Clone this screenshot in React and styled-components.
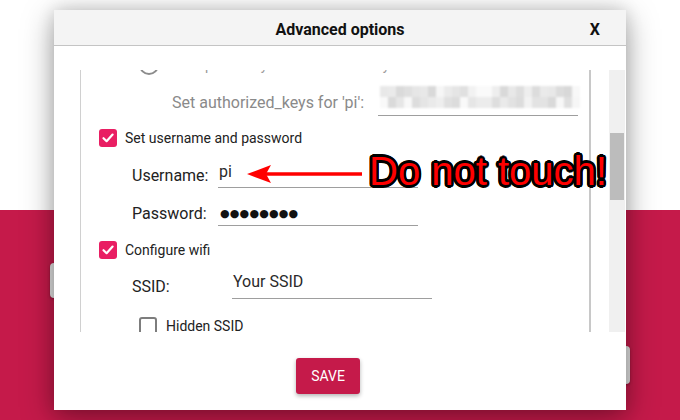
import React from "react";
import styled, { createGlobalStyle } from "styled-components";

const GlobalStyle = createGlobalStyle`
  html, body { margin: 0; padding: 0; width: 680px; height: 420px; overflow: hidden; background: #fff; }
  body { font-family: Roboto, "Liberation Sans", Arial, sans-serif; }
  * { box-sizing: border-box; }
`;

const Page = styled.div`
  position: relative;
  width: 680px;
  height: 420px;
  overflow: hidden;
  display: flex;
  flex-direction: column;
`;

const TopArea = styled.div`
  height: 210px;
  background: #ffffff;
`;

const BottomArea = styled.div`
  flex: 1;
  background: #c51a4a;
  display: flex;
  flex-direction: column;
`;

const BgRow = styled.div`
  display: flex;
  justify-content: ${(p) => (p.$end ? "flex-end" : "flex-start")};
  margin-top: ${(p) => p.$mt}px;
  padding: 0 50px;
`;

const BgButton = styled.div`
  width: 140px;
  height: ${(p) => p.$h}px;
  border-radius: 4px;
  background: #e3e3e3;
  box-shadow: 0 1px 3px rgba(0, 0, 0, 0.3);
`;

const Dialog = styled.div`
  position: absolute;
  left: 54px;
  top: 10px;
  width: 572px;
  height: 400px;
  background: #fff;
  box-shadow: 0 8px 30px rgba(0, 0, 0, 0.35), 0 0 16px rgba(0, 0, 0, 0.14);
  display: flex;
  flex-direction: column;
`;

const Header = styled.div`
  height: 36px;
  flex: none;
  background: #f4f4f4;
  border-bottom: 1px solid #c4c4c4;
  display: grid;
  grid-template-columns: 1fr auto 1fr;
  align-items: center;
  padding-top: 3px;
`;

const Title = styled.div`
  grid-column: 2;
  font-weight: 700;
  font-size: 16px;
  color: #111;
`;

const Close = styled.div`
  grid-column: 3;
  justify-self: end;
  margin-right: 26px;
  font-weight: 700;
  font-size: 16px;
  color: #111;
`;

const Body = styled.div`
  flex: none;
  margin-top: 24px;
  margin-left: 26px;
  height: 262px;
  display: flex;
  overflow: hidden;
`;

const Frame = styled.div`
  width: 511px;
  height: 100%;
  border-left: 1px solid #d0d0d0;
  border-right: 2px solid #c8c8c8;
  overflow: hidden;
`;

const Content = styled.div`
  display: flex;
  flex-direction: column;
  transform: translateY(${(p) => -p.$scroll}px);
`;

const Scrollbar = styled.div`
  margin-left: 18px;
  width: 16px;
  height: 100%;
  background: #f0f0f0;
  padding: 63px 1px 0;
`;

const Thumb = styled.div`
  height: 67px;
  background: #bcbcbc;
`;

const Row = styled.div`
  display: flex;
  align-items: ${(p) => p.$align || "center"};
  margin-top: ${(p) => p.$mt}px;
  padding-left: ${(p) => p.$indent}px;
  height: ${(p) => p.$h}px;
  flex: none;
`;

const Radio = styled.div`
  width: 20px;
  height: 20px;
  border-radius: 50%;
  border: 2px solid #8c8c8c;
  flex: none;
`;

const CheckBox = styled.div`
  width: 18px;
  height: 18px;
  border-radius: 3px;
  flex: none;
  background: ${(p) => (p.$checked ? "#e91e63" : "#fff")};
  border: ${(p) => (p.$checked ? "none" : "2px solid #7d7d7d")};
  display: flex;
  align-items: center;
  justify-content: center;
`;

const OptionText = styled.span`
  margin-left: ${(p) => p.$gap || 8}px;
  font-size: 14px;
  color: ${(p) => (p.$muted ? "#9a9a9a" : "#222")};
  white-space: nowrap;
`;

const Label = styled.div`
  width: ${(p) => p.$w}px;
  padding-top: ${(p) => p.$pt || 0}px;
  font-size: 16px;
  color: ${(p) => (p.$muted ? "#8a8a8a" : "#222")};
  white-space: nowrap;
  flex: none;
`;

const Field = styled.div`
  width: 200px;
  height: 100%;
  border-bottom: 1px solid #9e9e9e;
  padding-top: ${(p) => p.$pt || 0}px;
  padding-left: ${(p) => p.$pl || 1}px;
  font-size: 16px;
  line-height: 19px;
  color: #2a2a2a;
  flex: none;
`;

const Dots = styled.span`
  font-family: "DejaVu Sans", sans-serif;
  font-size: 11px;
  letter-spacing: 0.2px;
  color: #111;
`;

const Mosaic = styled.div`
  display: grid;
  grid-template-columns: repeat(25, 8px);
  grid-auto-rows: 11px;
  filter: blur(1.2px);
`;

const Cell = styled.div`
  background: ${(p) => p.$c};
`;

const Footer = styled.div`
  flex: 1;
  display: flex;
  justify-content: center;
  align-items: flex-start;
  padding-top: 26px;
  padding-right: 24px;
`;

const SaveButton = styled.button`
  width: 64px;
  height: 36px;
  background: #c51a4a;
  color: #fff;
  border: 0;
  border-radius: 3px;
  font-family: Roboto, "Liberation Sans", sans-serif;
  font-size: 14px;
  font-weight: 400;
  box-shadow: 0 2px 4px rgba(0, 0, 0, 0.3);
  padding: 0;
`;

const ArrowSvg = styled.svg`
  position: absolute;
  left: 244px;
  top: 162px;
  width: 122px;
  height: 24px;
  overflow: visible;
`;

const outline = (() => {
  const r = 2.6;
  const parts = [];
  for (let i = 0; i < 16; i++) {
    const a = (i / 16) * Math.PI * 2;
    parts.push(`${(Math.cos(a) * r).toFixed(2)}px ${(Math.sin(a) * r).toFixed(2)}px 0 #000`);
  }
  parts.push("0 0 3px rgba(0,0,0,0.6)");
  return parts.join(", ");
})();

const Annotation = styled.div`
  position: absolute;
  left: 369px;
  top: 151px;
  font-family: "Liberation Sans", Arial, sans-serif;
  font-size: 40px;
  line-height: 40px;
  color: #ff0000;
  white-space: nowrap;
  text-shadow: ${outline};
`;

const mosaicColors = (() => {
  const out = [];
  let seed = 7;
  const rnd = () => {
    seed = (seed * 9301 + 49297) % 233280;
    return seed / 233280;
  };
  for (let r = 0; r < 2; r++) {
    for (let c = 0; c < 25; c++) {
      let v;
      if (c >= 12 && c <= 13) v = r === 0 ? 250 : 236;
      else v = Math.round(214 + rnd() * 36);
      out.push(`rgb(${v},${v},${v})`);
    }
  }
  return out;
})();

function Check() {
  return (
    <svg width="14" height="14" viewBox="0 0 14 14">
      <path d="M2.5 7.2 L5.6 10.2 L11.6 3.6" fill="none" stroke="#fff" strokeWidth="2.2" strokeLinecap="round" strokeLinejoin="round" />
    </svg>
  );
}

export default function App() {
  return (
    <>
      <GlobalStyle />
      <Page>
        <TopArea />
        <BottomArea>
          <BgRow $mt={53}>
            <BgButton $h={35} />
          </BgRow>
          <BgRow $mt={48} $end>
            <BgButton $h={38} />
          </BgRow>
        </BottomArea>

        <Dialog>
          <Header>
            <Title>Advanced options</Title>
            <Close>X</Close>
          </Header>
          <Body>
            <Frame>
              <Content $scroll={18}>
                <Row $mt={3} $indent={58} $h={20}>
                  <Radio />
                  <OptionText $muted>Allow public-key authentication only</OptionText>
                </Row>
                <Row $mt={11} $indent={91} $h={30}>
                  <Label $w={206} $pt={3} $muted>Set authorized_keys for 'pi':</Label>
                  <Field $pt={0} $pl={2}>
                    <Mosaic>
                      {mosaicColors.map((c, i) => (
                        <Cell key={i} $c={c} />
                      ))}
                    </Mosaic>
                  </Field>
                </Row>
                <Row $mt={13} $indent={18} $h={18}>
                  <CheckBox $checked>
                    <Check />
                  </CheckBox>
                  <OptionText>Set username and password</OptionText>
                </Row>
                <Row $mt={15} $indent={51} $h={26}>
                  <Label $w={86}>Username:</Label>
                  <Field $pt={0}>pi</Field>
                </Row>
                <Row $mt={12} $indent={51} $h={26}>
                  <Label $w={86}>Password:</Label>
                  <Field $pt={2} $pl={2}>
                    <Dots>●●●●●●●●</Dots>
                  </Field>
                </Row>
                <Row $mt={15} $indent={18} $h={18}>
                  <CheckBox $checked>
                    <Check />
                  </CheckBox>
                  <OptionText>Configure wifi</OptionText>
                </Row>
                <Row $mt={9} $indent={51} $h={31}>
                  <Label $w={100} $pt={6}>SSID:</Label>
                  <Field $pt={4}>Your SSID</Field>
                </Row>
                <Row $mt={18} $indent={58} $h={18}>
                  <CheckBox />
                  <OptionText $gap={9}>Hidden SSID</OptionText>
                </Row>
              </Content>
            </Frame>
            <Scrollbar>
              <Thumb />
            </Scrollbar>
          </Body>
          <Footer>
            <SaveButton>SAVE</SaveButton>
          </Footer>
        </Dialog>

        <ArrowSvg viewBox="0 0 122 24">
          <line x1="21" y1="12" x2="118" y2="12" stroke="#ff0000" strokeWidth="3.5" />
          <polygon points="3,12 27,3 22,12 27,21" fill="#ff0000" />
        </ArrowSvg>
        <Annotation>Do not touch!</Annotation>
      </Page>
    </>
  );
}
